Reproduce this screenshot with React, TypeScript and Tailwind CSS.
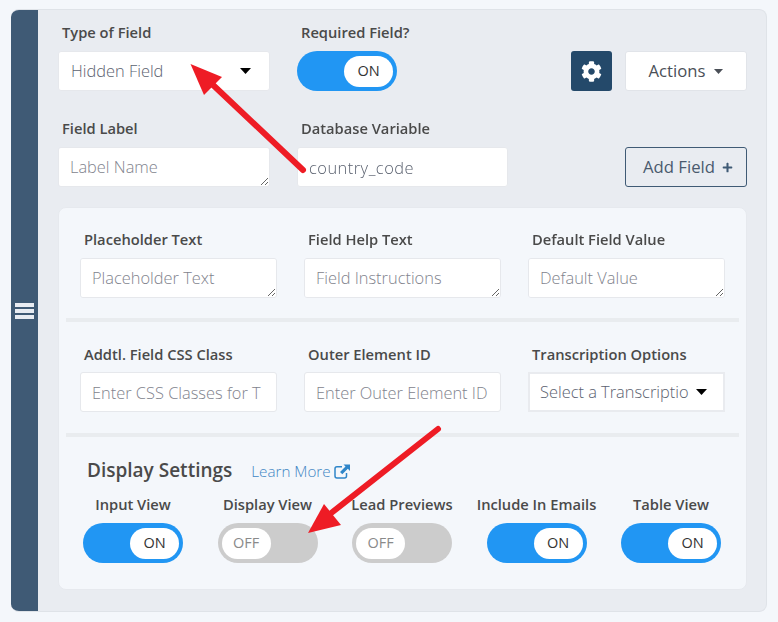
import { FaCog, FaPlus } from 'react-icons/fa'

const labelCls = 'block text-[14.7px] font-semibold leading-[16px] text-[#4a4a4a]'
const boxCls =
  'block h-10 w-full rounded-[3px] border border-[#e6e8ec] bg-white px-[11px] text-[16.400px] font-light text-[#5b6270] outline-none placeholder:text-[#7f838d]'

function Toggle({ on }: { on: boolean }) {
  return (
    <div
      className={`flex h-10 w-[100px] items-center rounded-full px-1 ${on ? 'justify-end bg-[#2196f3]' : 'justify-start bg-[#cccccc]'}`}
    >
      <div
        className={`flex h-[31px] w-[49px] items-center justify-center rounded-full bg-white text-[14.5px] ${on ? 'text-[#333333]' : 'text-[#8a8a8a]'}`}
      >
        {on ? 'ON' : 'OFF'}
      </div>
    </div>
  )
}

function Caret({ className }: { className: string }) {
  return (
    <svg width="11" height="6" viewBox="0 0 11 6" className={className}>
      <path d="M0 0h11L5.500 6z" fill="currentColor" />
    </svg>
  )
}

function Field({ label, placeholder, area }: { label: string; placeholder: string; area?: boolean }) {
  return (
    <div className="flex flex-col">
      <label className={`${labelCls} pl-1 ${area ? 'pb-[11px]' : 'pb-[10px]'}`}>{label}</label>
      {area ? (
        <textarea readOnly placeholder={placeholder} className={`${boxCls} py-[7px]`} />
      ) : (
        <input readOnly placeholder={placeholder} className={boxCls} />
      )}
    </div>
  )
}

function ToggleCol({ label, on }: { label: string; on: boolean }) {
  return (
    <div className="flex w-[100px] flex-col items-center gap-[11px]">
      <span className={`${labelCls} whitespace-nowrap`}>{label}</span>
      <Toggle on={on} />
    </div>
  )
}

function App() {
  return (
    <div className="relative h-[622px] w-[778px] bg-[#f4f7fb] pl-[11px] pr-[11px] pt-[9px] font-['Open_Sans',sans-serif]">
      <div className="flex h-[603px] overflow-hidden rounded-[8px] border border-l-0 border-[#dfe3e8] bg-[#e9ecf1]">
        <div className="flex w-[27px] shrink-0 items-center justify-center bg-[#3f5a75]">
          <div className="flex w-[19px] flex-col gap-[2px]">
            <div className="h-1 bg-[#e8ecf2]" />
            <div className="h-1 bg-[#e8ecf2]" />
            <div className="h-1 bg-[#e8ecf2]" />
          </div>
        </div>

        <div className="flex-1 pl-5 pr-5 pt-[14px]">
          <div className="flex items-end">
            <div className="w-[212px]">
              <label className={`${labelCls} pb-[11px] pl-1`}>Type of Field</label>
              <div className="flex h-10 items-center justify-between rounded-[3px] border border-[#e6e8ec] bg-white pl-3 pr-[18px] text-[16.400px] font-light text-[#5b6270]">
                Hidden Field
                <Caret className="text-black" />
              </div>
            </div>
            <div className="ml-[27px]">
              <label className={`${labelCls} pb-[11px] pl-1`}>Required Field?</label>
              <Toggle on />
            </div>
            <button className="ml-auto flex h-10 w-[41px] items-center justify-center rounded-[3px] bg-[#24496a] text-[21px] text-white">
              <FaCog />
            </button>
            <button className="ml-[13px] flex h-10 w-[122px] items-center justify-center gap-[9px] rounded-[3px] border border-[#e1e4e9] bg-white text-[16.700px] text-[#4a4f57]">
              Actions
              <Caret className="mt-[1px] h-[5px] w-[9px] text-[#4a4f57]" />
            </button>
          </div>

          <div className="mt-[29px] flex items-end">
            <div className="w-[212px]">
              <label className={`${labelCls} pb-[11px] pl-1`}>Field Label</label>
              <textarea readOnly placeholder="Label Name" className={`${boxCls} py-[7px]`} />
            </div>
            <div className="ml-[27px] w-[211px]">
              <label className={`${labelCls} pb-[11px] pl-1`}>Database Variable</label>
              <input readOnly value="country_code" className={`${boxCls} tracking-[0.5px]`} />
            </div>
            <button className="ml-auto flex h-10 w-[122px] items-center justify-center gap-[7px] rounded-[3px] border border-[#3f5a75] pl-1 text-[16.700px] text-[#4a5a6e]">
              Add Field
              <FaPlus className="text-[11px] text-[#3f5a75]" />
            </button>
          </div>

          <div className="mt-5 h-[383px] rounded-[8px] border border-[#e6e9ee] bg-[#f4f7fb] px-[7px] pt-[23px]">
            <div className="grid grid-cols-[197px_197px_197px] gap-x-[27px] px-[14px]">
              <Field label="Placeholder Text" placeholder="Placeholder Text" area />
              <Field label="Field Help Text" placeholder="Field Instructions" area />
              <Field label="Default Field Value" placeholder="Default Value" area />
            </div>
            <div className="mt-5 h-1 bg-[#e9ecef]" />
            <div className="mt-6 grid grid-cols-[197px_197px_197px] gap-x-[27px] px-[14px]">
              <Field label="Addtl. Field CSS Class" placeholder="Enter CSS Classes for T" />
              <Field label="Outer Element ID" placeholder="Enter Outer Element ID" />
              <div className="flex flex-col">
                <label className={`${labelCls} pb-[10px] pl-1`}>Transcription Options</label>
                <div className="flex h-10 items-center justify-between border-2 border-[#e9ebef] bg-white pl-[10px] pr-[16px] text-[16.400px] font-light text-[#5b6270]">
                  <span className="w-[151px] overflow-hidden whitespace-nowrap">Select a Transcriptio</span>
                  <Caret className="shrink-0 text-black" />
                </div>
              </div>
            </div>
            <div className="mt-[21px] h-1 bg-[#e9ecef]" />

            <div className="mt-5 flex items-baseline pl-[21px]">
              <span className="text-[19px] font-semibold leading-[27px] text-[#4a4a4a]">Display Settings</span>
              <a className="ml-[19px] flex items-center gap-[3px] text-[15.200px] font-light leading-[20px] text-[#3f86c4]">
                Learn More
                <svg width="16" height="15" viewBox="0 0 16 15" className="text-[#2f86c9]">
                  <path
                    d="M8 2.800H3a2 2 0 0 0-2 2V12a2 2 0 0 0 2 2h7.500a2 2 0 0 0 2-2V9"
                    fill="none"
                    stroke="currentColor"
                    strokeWidth="1.500"
                  />
                  <path d="M9.500 0.500H16V7L13.800 4.800L8.300 10.300L6 8L11.500 2.500z" fill="currentColor" />
                </svg>
              </a>
            </div>
            <div className="mt-3 flex gap-[34.5px] pl-[17px]">
              <ToggleCol label="Input View" on />
              <ToggleCol label="Display View" on={false} />
              <ToggleCol label="Lead Previews" on={false} />
              <ToggleCol label="Include In Emails" on />
              <ToggleCol label="Table View" on />
            </div>
          </div>
        </div>
      </div>

      {/* red annotation arrows */}
      <svg className="pointer-events-none absolute left-0 top-0" width="778" height="622" viewBox="0 0 778 622">
        <path d="M303 170L212 84" stroke="#ee1c25" strokeWidth="6" strokeLinecap="round" />
        <path d="M190.500 64L222 77L204 95z" fill="#ee1c25" />
        <path d="M438 429L330 514" stroke="#ee1c25" strokeWidth="6" strokeLinecap="round" />
        <path d="M308 533L324 504L341 525z" fill="#ee1c25" />
      </svg>
    </div>
  )
}

export default App
